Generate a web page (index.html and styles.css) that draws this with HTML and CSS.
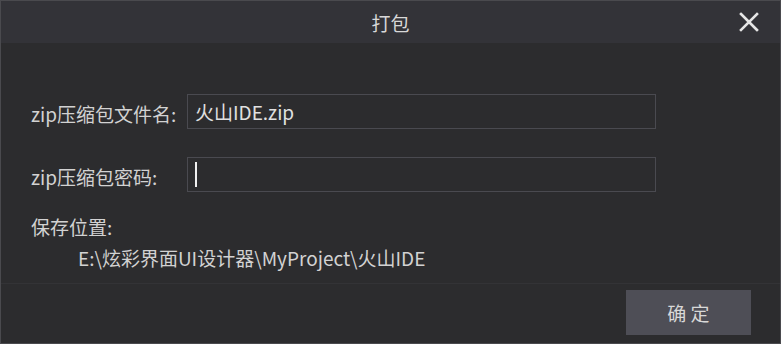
FILE: index.html
```html
<!DOCTYPE html>
<html lang="zh-CN">

<head>
    <meta charset="UTF-8">
    <title>打包</title>
    <link rel="stylesheet" href="styles.css">
</head>

<body>
    <div class="dialog">
        <div class="titlebar">
            <span></span>
            <h1>打包</h1>
            <span class="close">
                <svg width="20" height="20" viewBox="0 0 20 20">
                    <path d="M2 2 L18 18 M18 2 L2 18" stroke="#e6e6e6" stroke-width="2.6" stroke-linecap="square" />
                </svg>
            </span>
        </div>

        <div class="content">
            <div class="row">
                <label>zip压缩包文件名:</label>
                <div class="field">火山IDE.zip</div>
            </div>
            <div class="row">
                <label>zip压缩包密码:</label>
                <div class="field"><span class="caret"></span></div>
            </div>
            <p class="save-label">保存位置:</p>
            <p class="save-path">E:\炫彩界面UI设计器\MyProject\火山IDE</p>
        </div>

        <div class="footer">
            <button class="ok">确 定</button>
        </div>
    </div>
</body>

</html>
```

FILE: styles.css
```css
body {
    margin: 0;
    padding: 0;
    background-color: #2c2c2e;
    font-family: "Noto Sans CJK SC", "Liberation Sans", sans-serif;
    color: #d2d2d2;
}

.dialog {
    width: 781px;
    height: 344px;
    box-sizing: border-box;
    border: 1px solid #4a4a4e;
    background-color: #2c2c2e;
    display: flex;
    flex-direction: column;
}

.titlebar {
    height: 42px;
    background-color: #333338;
    display: grid;
    grid-template-columns: 1fr auto 1fr;
    align-items: center;
}

.titlebar h1 {
    margin: 0;
    font-size: 19px;
    font-weight: normal;
    color: #d8d8d8;
}

.close {
    justify-self: end;
    display: flex;
    margin-right: 21px;
}

.content {
    flex: 1;
    padding: 51px 0 0 30px;
}

.row {
    display: flex;
    align-items: center;
    margin-bottom: 28px;
}

.row label {
    width: 156px;
    font-size: 19px;
    padding-top: 4px;
}

.field {
    width: 469px;
    height: 35px;
    box-sizing: border-box;
    border: 1px solid #4a4a50;
    display: flex;
    align-items: center;
    padding-left: 7px;
    font-size: 19px;
    color: #e0e0e0;
}

.caret {
    width: 2px;
    height: 25px;
    background-color: #f0f0f0;
}

.save-label {
    margin: -5px 0 0;
    font-size: 19px;
    line-height: 24px;
}

.save-path {
    margin: 7px 0 0 47px;
    font-size: 19px;
    line-height: 24px;
}

.footer {
    height: 59px;
    border-top: 1px solid #333336;
    display: flex;
    justify-content: flex-end;
    align-items: flex-start;
    padding-right: 29px;
}

.ok {
    margin-top: 6px;
    width: 125px;
    height: 45px;
    border: none;
    background-color: #4e4e56;
    color: #d8d8d8;
    font-family: "Noto Sans CJK SC", sans-serif;
    font-size: 19px;
    cursor: pointer;
}
```
